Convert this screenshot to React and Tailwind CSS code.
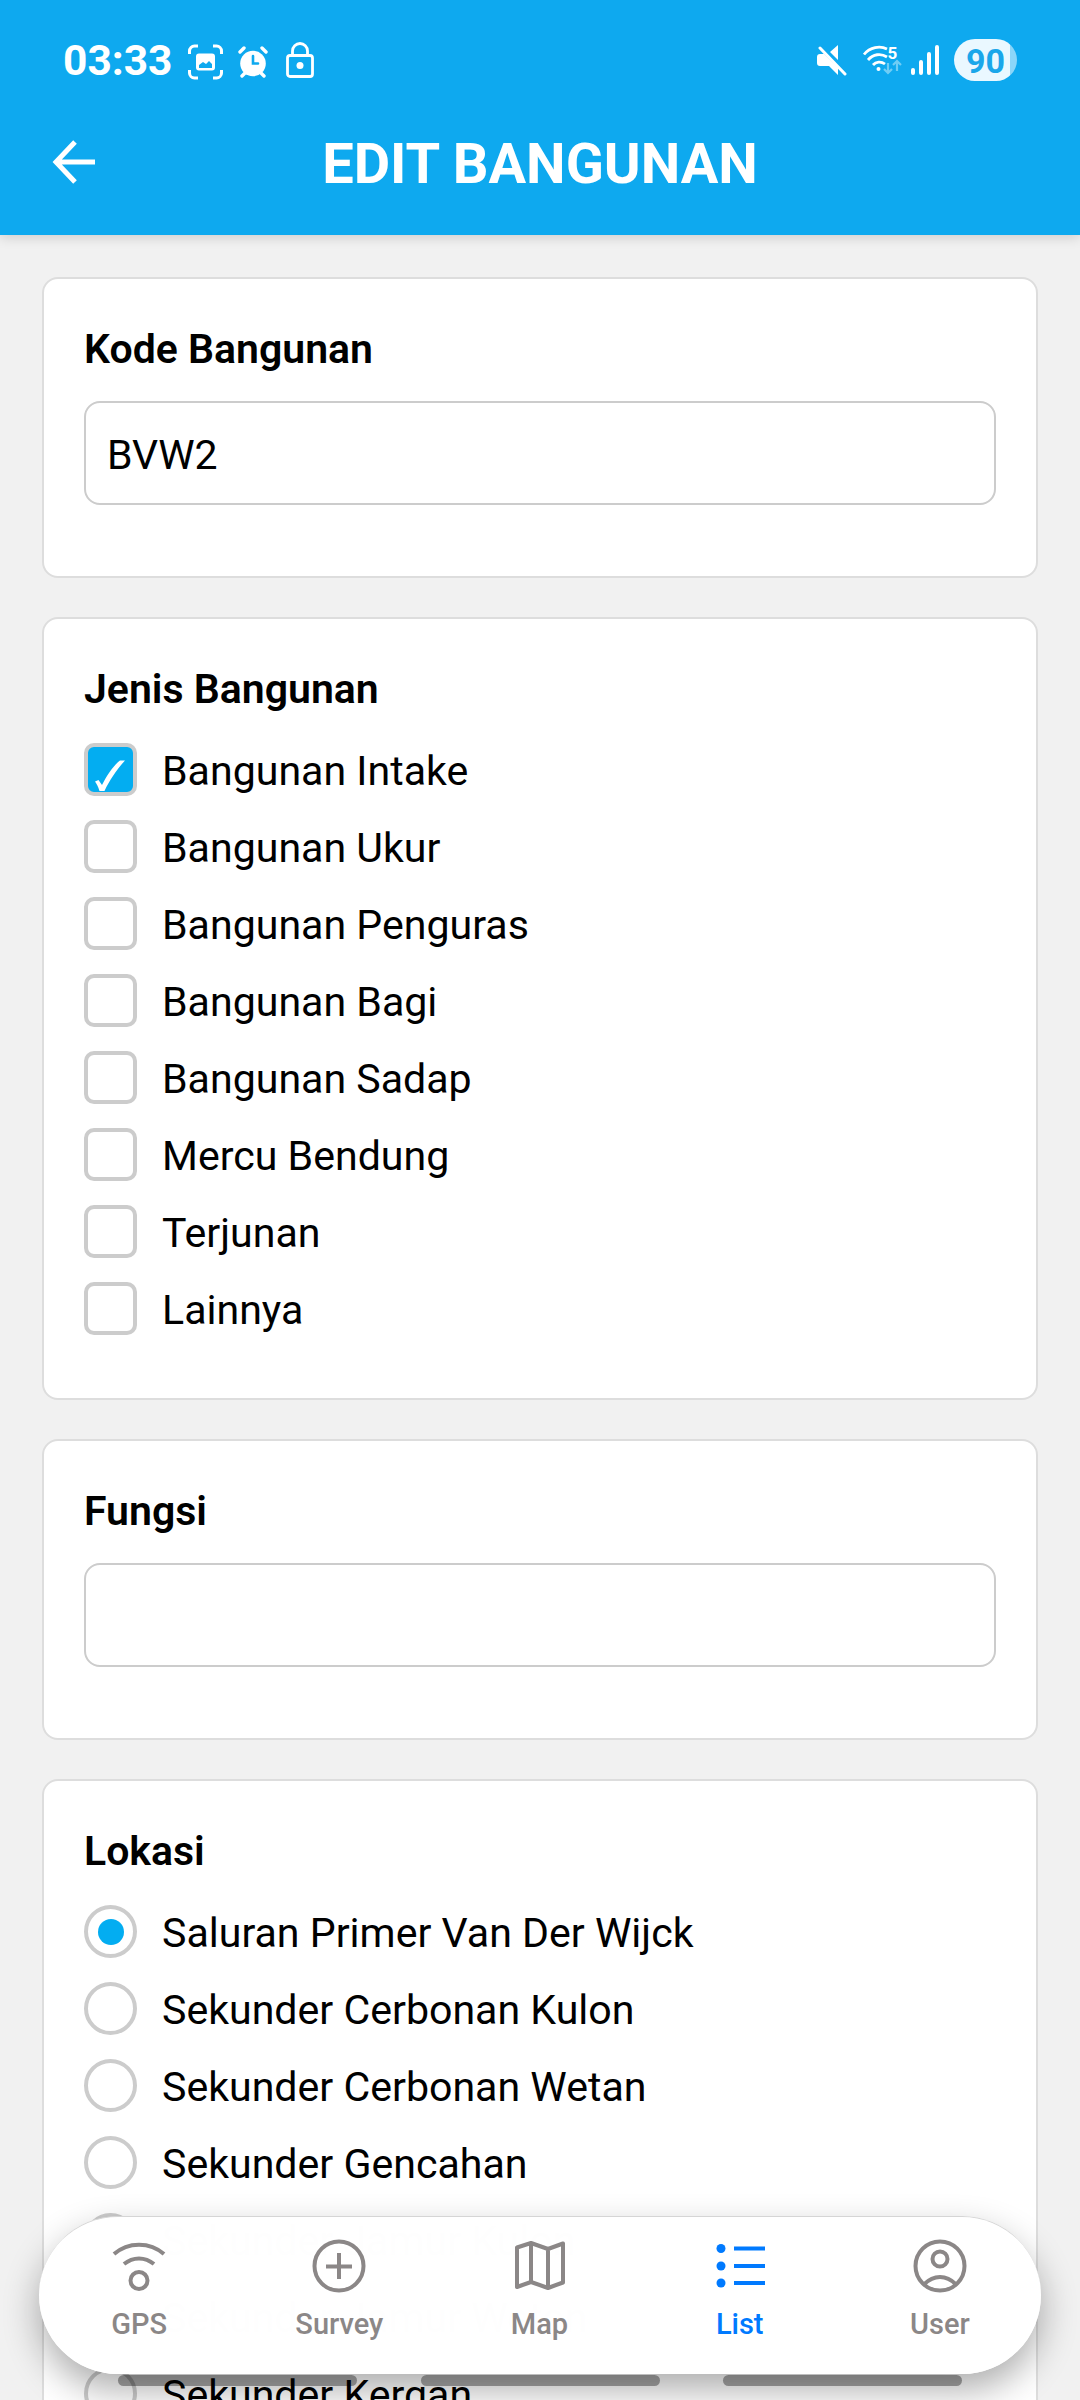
import React from "react";

const FONT = "font-[Roboto,sans-serif]";

function StatusBar() {
  return (
    <div className="flex h-[120px] items-center justify-between pl-[63px] pr-[63px] text-white">
      <div className="flex h-full items-center">
        <span className="w-[125px] whitespace-nowrap pt-[2px] text-[42.500px] font-bold leading-none">03:33</span>
        <svg className="mt-[3px] h-[36px] w-[35px]" viewBox="0 0 35 36" fill="none">
          <path
            d="M1.500 10V7a5 5 0 0 1 5-5H10M25 2h3.500a5 5 0 0 1 5 5v3M33.500 26v3a5 5 0 0 1-5 5H25M10 34H6.500a5 5 0 0 1-5-5v-3"
            stroke="white"
            strokeWidth="3"
          />
          <path
            fillRule="evenodd"
            fill="white"
            d="M11 9.500h13a3 3 0 0 1 3 3v11a3 3 0 0 1-3 3H11a3 3 0 0 1-3-3v-11a3 3 0 0 1 3-3zM11 24h13v-4l-3-3-3 3-3-2-4 3z"
          />
        </svg>
        <svg className="ml-[15px] mt-[3px] h-[32px] w-[30px]" viewBox="0 0 30 32" fill="none">
          <circle cx="15" cy="17.500" r="12.800" fill="white" />
          <path d="M2 6l4-4M28 6l-4-4M4 30l3-3M26 30l-3-3" stroke="white" strokeWidth="3.400" strokeLinecap="round" />
          <path d="M15 10v7.500h5" stroke="#0ea9ef" strokeWidth="2.600" strokeLinecap="round" />
        </svg>
        <svg className="ml-[18px] h-[36px] w-[28px]" viewBox="0 0 28 36" fill="none" stroke="white" strokeWidth="2.800">
          <rect x="1.500" y="13.500" width="25" height="21" rx="2.500" />
          <path d="M6.500 13V9a7.500 7.500 0 0 1 15 0v4" />
          <circle cx="14" cy="23.500" r="3.500" fill="white" stroke="none" />
        </svg>
      </div>
      <div className="flex h-full items-center">
        <svg className="h-[32px] w-[30px]" viewBox="0 0 30 32" fill="white">
          <path d="M21 1v15L13 8zM3 10h4l14 14v7l-9-9H3a3 3 0 0 1-3-3v-6a3 3 0 0 1 3-3z" />
          <path d="M3 4l25 26" stroke="white" strokeWidth="3" strokeLinecap="round" />
        </svg>
        <svg className="ml-[15px] h-[30px] w-[40px] overflow-visible" viewBox="0 0 40 30" fill="none">
          <path d="M2 9.500C8 2 18 .500 25 4M6 15c5-6 13-7 19-3M11 20c3-3.500 8-4 12-1" stroke="white" strokeWidth="2.800" />
          <circle cx="16.500" cy="24" r="2" fill="white" />
          <path d="M26 18v9M22 24l4 4 4-4M35 26v-9M31 20l4-4 4 4" stroke="#6fcdf5" strokeWidth="2.200" />
          <text x="25.500" y="14" fill="white" fontSize="17" fontWeight="700" fontFamily="Roboto">
            5
          </text>
        </svg>
        <svg className="ml-[9px] h-[30px] w-[28px]" viewBox="0 0 28 30" stroke="white" strokeWidth="4" strokeLinecap="round">
          <path d="M2 25v3M10 17v11M18 9v19M26 2v26" />
        </svg>
        <div className="ml-[15px] flex h-[42px] w-[63px] items-center justify-center rounded-full bg-[linear-gradient(90deg,#eaf8ff_56px,#8bd6f9_56px)] pt-[2px] text-[34px] font-bold leading-none text-[#1aa7ea]">
          90
        </div>
      </div>
    </div>
  );
}

function Header() {
  return (
    <header className="relative z-10 h-[235px] bg-[#0ea9ef] shadow-[0_2px_12px_rgba(0,0,0,0.16)]">
      <StatusBar />
      <div className="grid grid-cols-[95px_1fr_95px] pt-[10px]">
        <div className="flex h-[64px] items-center pl-[52px]">
          <svg className="h-[44px] w-[43px]" viewBox="0 0 43 44" fill="none" stroke="white" strokeWidth="5">
            <path d="M43 22H5M23 2L4 22l19 20" />
          </svg>
        </div>
        <h1 className="pt-px text-center text-[56px] font-bold leading-[66px] text-white">EDIT BANGUNAN</h1>
      </div>
    </header>
  );
}

function Card({ title, children, className = "" }) {
  return (
    <section className={"rounded-[16px] border-2 border-[#ddd] bg-white px-[40px] pt-[42px] " + className}>
      <h2 className="text-[41px] font-semibold leading-[56px] text-black">{title}</h2>
      {children}
    </section>
  );
}

function TextField({ value }) {
  return (
    <div className="mt-[24px] flex h-[104px] items-center rounded-[16px] border-2 border-[#ccc] px-[21px] pt-[4px] text-[41px] leading-none">
      {value}
    </div>
  );
}

function Choice({ label, round, checked }) {
  return (
    <div className="flex h-[53px] items-center">
      <span
        className={
          "flex h-[53px] w-[53px] shrink-0 items-center justify-center border-4 border-[#ccc] " +
          (round ? "rounded-full bg-white" : checked ? "rounded-[10px] bg-[#03adf1]" : "rounded-[10px] bg-white")
        }
      >
        {checked && round && <span className="h-[26px] w-[26px] rounded-full bg-[#03adf1]" />}
        {checked && !round && (
          <svg className="h-[45px] w-[45px]" viewBox="0 0 45 45" fill="white">
            <path d="M7 34.500l3.500-1.500 3.500 5C19 28 26 18 32 13.500h5C30 21 21.500 33 16.500 44h-5C10 39 8.500 37 7 34.500z" />
          </svg>
        )}
      </span>
      <span className="ml-[25px] whitespace-nowrap pt-[4px] text-[41.100px] leading-none">{label}</span>
    </div>
  );
}

const jenis = [
  "Bangunan Intake",
  "Bangunan Ukur",
  "Bangunan Penguras",
  "Bangunan Bagi",
  "Bangunan Sadap",
  "Mercu Bendung",
  "Terjunan",
  "Lainnya",
];

const lokasi = [
  "Saluran Primer Van Der Wijck",
  "Sekunder Cerbonan Kulon",
  "Sekunder Cerbonan Wetan",
  "Sekunder Gencahan",
  "Sekunder Jamur Kulon",
  "Sekunder Jamur Wetan",
  "Sekunder Kergan",
];

const icons = {
  GPS: (
    <>
      <path d="M2 16C16 3.500 38 3.500 52 16M12 26c9-7.500 21-7.500 30 0" />
      <circle cx="27" cy="42.500" r="8.500" />
    </>
  ),
  Survey: (
    <>
      <circle cx="27" cy="28" r="24.500" />
      <path d="M14 28.500h26M27 15v26" />
    </>
  ),
  Map: (
    <path
      strokeLinejoin="round"
      d="M4 9.500L18 5 35 11 50 5.500v39L35 50 18 44 4 49zM18 5V44M35 11V50"
    />
  ),
  List: (
    <>
      <path d="M21 10.500h31M21 28h31M21 45h31" />
      <g fill="currentColor" stroke="none">
        <circle cx="8" cy="10.500" r="4.500" />
        <circle cx="8" cy="28" r="4.500" />
        <circle cx="8" cy="45" r="4.500" />
      </g>
    </>
  ),
  User: (
    <>
      <circle cx="27" cy="28" r="24.500" />
      <circle cx="27" cy="21" r="7.500" />
      <path d="M11.500 46c9-9.500 22-9.500 31 0" />
    </>
  ),
};

function BottomNav() {
  return (
    <nav className="absolute left-[39px] top-[2216px] z-20 flex h-[158px] w-[1002px] rounded-full border-t border-[#d5d5d5] bg-white/[0.995] pr-[1px] shadow-[0_16px_36px_rgba(0,0,0,0.32)]">
      {Object.keys(icons).map((name) => (
        <div
          key={name}
          className={"flex flex-1 flex-col items-center pt-[21px] " + (name === "List" ? "text-[#007aff]" : "text-[#8b8787]")}
        >
          <svg className="h-[56px] w-[54px]" viewBox="0 0 54 56" fill="none" stroke="currentColor" strokeWidth="4">
            {icons[name]}
          </svg>
          <span className="mt-[13px] text-[29px] font-medium leading-[34px]">{name}</span>
        </div>
      ))}
    </nav>
  );
}

export default function App() {
  return (
    <div className={"relative h-[2400px] w-[1080px] overflow-hidden bg-[#f1f1f1] text-black " + FONT}>
      <Header />
      <main className="flex flex-col gap-[39px] px-[42px] pt-[42px]">
        <Card title="Kode Bangunan" className="h-[301px]">
          <TextField value="BVW2" />
        </Card>
        <Card title="Jenis Bangunan" className="h-[783px]">
          <div className="mt-[26px] flex flex-col gap-[24px]">
            {jenis.map((j, i) => (
              <Choice key={j} label={j} checked={i === 0} />
            ))}
          </div>
        </Card>
        <Card title="Fungsi" className="h-[301px]">
          <TextField value="" />
        </Card>
        <Card title="Lokasi" className="h-[783px] shrink-0">
          <div className="mt-[26px] flex flex-col gap-[24px]">
            {lokasi.map((j, i) => (
              <Choice key={j} label={j} round checked={i === 0} />
            ))}
          </div>
        </Card>
      </main>
      <BottomNav />
      <div className="absolute left-[118px] top-[2375px] z-30 flex gap-[63.500px]">
        <span className="h-[11px] w-[239px] rounded-full bg-black/35" />
        <span className="h-[11px] w-[239px] rounded-full bg-black/35" />
        <span className="h-[11px] w-[239px] rounded-full bg-black/35" />
      </div>
    </div>
  );
}
